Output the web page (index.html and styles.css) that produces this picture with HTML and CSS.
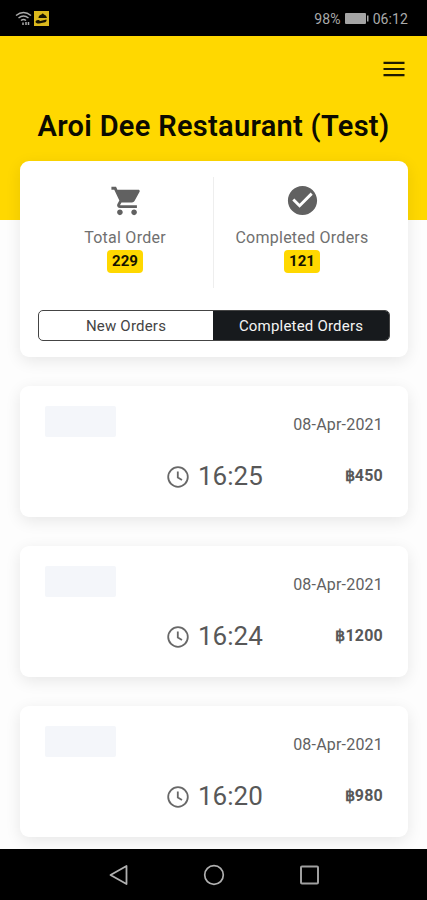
FILE: index.html
```html
<!DOCTYPE html>
<html lang="en">
<head>
  <meta charset="UTF-8" />
  <meta name="viewport" content="width=device-width, initial-scale=1.0"/>
  <title>Aroi Dee Restaurant</title>
  <link rel="stylesheet" href="styles.css">
</head>
<body>
  <div class="statusbar">
    <div class="status-left">
      <svg width="17" height="15" viewBox="0 0 17 15" fill="none" stroke="#aaa" stroke-width="1.500">
        <path d="M1 4.500Q8.500-1.500 16 4.500M3.500 7Q8.500 3 13.500 7M6 9.500Q8.500 7.500 11 9.500"/>
        <path d="M8 11.500V14M11 11V14M13.500 11V14"/>
      </svg>
      <svg width="15" height="15" viewBox="0 0 15 15">
        <rect width="15" height="15" fill="#dcb91c"/>
        <path d="M4.500 7Q4.500 4 7.500 3.500Q8.500 1.500 10 3.500Q12.500 4 13 7ZM1.500 10.500Q2 8.500 5 9L6 10L12.500 8.500Q13 11 10 11.500L5 12.500Q1.500 12.500 1.500 10.500Z" fill="#171300"/>
      </svg>
    </div>
    <div class="status-right">
      <span>98%</span>
      <svg width="24" height="11" viewBox="0 0 24 11"><rect width="21" height="11" rx="1" fill="#a4a4a4"/><path d="M22 2.500h1.500v6H22z" fill="#aaa"/></svg>
      <span>06:12</span>
    </div>
  </div>

  <header class="header">
    <svg class="menu" width="22" height="16" viewBox="0 0 22 16" fill="#1e1b00"><path d="M.5 0.700h21v2.300H.5zM.5 6.900h21v2.200H.5zM.5 13h21v2.300H.5z"/></svg>
    <h1>Aroi Dee Restaurant (Test)</h1>
  </header>

  <main>
    <section class="card summary">
      <div class="stats">
        <div class="stat">
          <svg class="cart" width="34" height="34" viewBox="0 0 24 24" fill="#616161"><path d="M7 18c-1.100 0-1.990.9-1.990 2S5.900 22 7 22s2-.9 2-2-.9-2-2-2zM1 2v2h2l3.600 7.590-1.350 2.450c-.16.280-.25.610-.25.960 0 1.100.9 2 2 2h12v-2H7.420c-.14 0-.25-.11-.25-.25l.03-.12.900-1.630h7.450c.75 0 1.410-.41 1.750-1.030l3.580-6.490c.08-.14.120-.31.120-.48 0-.55-.45-1-1-1H5.210l-.94-2H1zm16 16c-1.100 0-1.990.9-1.990 2s.89 2 1.990 2 2-.9 2-2-.9-2-2-2z"/></svg>
          <span class="label">Total Order</span>
          <span class="badge">229</span>
        </div>
        <div class="stat">
          <svg width="35" height="35" viewBox="0 0 24 24" fill="#616161"><path d="M12 2C6.480 2 2 6.480 2 12s4.480 10 10 10 10-4.480 10-10S17.520 2 12 2zm-2 15l-5-5 1.410-1.410L10 14.170l7.590-7.590L19 8l-9 9z"/></svg>
          <span class="label">Completed Orders</span>
          <span class="badge">121</span>
        </div>
      </div>
      <div class="tabs">
        <div class="tab">New Orders</div>
        <div class="tab active">Completed Orders</div>
      </div>
    </section>

    <section class="card order">
      <div class="row"><span class="tag"></span><span class="date">08-Apr-2021</span></div>
      <div class="row bottom">
        <svg class="clock" viewBox="0 0 22 22" fill="none" stroke="#686868" stroke-width="1.800"><circle cx="11" cy="11" r="9.800"/><path d="M10.800 5.500V11.500L15 14"/></svg>
        <span class="time">16:25</span>
        <span class="price">฿450</span>
      </div>
    </section>

    <section class="card order">
      <div class="row"><span class="tag"></span><span class="date">08-Apr-2021</span></div>
      <div class="row bottom">
        <svg class="clock" viewBox="0 0 22 22" fill="none" stroke="#686868" stroke-width="1.800"><circle cx="11" cy="11" r="9.800"/><path d="M10.800 5.500V11.500L15 14"/></svg>
        <span class="time">16:24</span>
        <span class="price">฿1200</span>
      </div>
    </section>

    <section class="card order">
      <div class="row"><span class="tag"></span><span class="date">08-Apr-2021</span></div>
      <div class="row bottom">
        <svg class="clock" viewBox="0 0 22 22" fill="none" stroke="#686868" stroke-width="1.800"><circle cx="11" cy="11" r="9.800"/><path d="M10.800 5.500V11.500L15 14"/></svg>
        <span class="time">16:20</span>
        <span class="price">฿980</span>
      </div>
    </section>
  </main>

  <nav class="navbar">
    <svg width="20" height="22" viewBox="0 0 20 22" fill="none" stroke="#b0b0b0" stroke-width="1.800" stroke-linejoin="round"><path d="M18.500 2V20L2.500 11Z"/></svg>
    <svg width="22" height="22" viewBox="0 0 22 22" fill="none" stroke="#b0b0b0" stroke-width="1.700"><circle cx="11" cy="11" r="9.300"/></svg>
    <svg width="20" height="20" viewBox="0 0 20 20" fill="none" stroke="#a0a0a0" stroke-width="2"><rect x="1" y="1.500" width="17" height="17" rx="1"/></svg>
  </nav>
</body>
</html>
```

FILE: styles.css
```css
* { box-sizing: border-box; }
body { margin: 0; height: 900px; overflow: hidden; display: flex; flex-direction: column; background: #fdfdfd; font-family: Roboto, "Noto Sans", sans-serif; color: #616161; }
.statusbar { height: 36px; flex: none; background: #000; color: #aaa; display: flex; justify-content: space-between; align-items: center; padding: 1px 19px 0 15px; font-size: 14px; }
.status-left { display: flex; gap: 2px; }
.status-right { display: flex; align-items: center; gap: 4px; letter-spacing: .1px; }
.header { height: 184px; flex: none; background: #ffd800; padding: 25px 22px 0; display: flex; flex-direction: column; align-items: center; }
.menu { align-self: flex-end; }
h1 { margin: 31px 0 0; font-size: 29px; line-height: 36px; font-weight: 600; letter-spacing: .3px; color: #0c0b00; white-space: nowrap; }
main { height: 629px; flex: none; padding: 0 19px 0 20px; display: flex; flex-direction: column; gap: 29px; }
.card { background: #fff; border-radius: 9px; box-shadow: 0 4px 16px rgba(0,0,0,.09); flex: none; }
.summary { height: 196px; margin-top: -59px; padding: 16px 18px; }
.stats { display: flex; height: 111px; }
.stat { flex: 1; display: flex; flex-direction: column; align-items: center; padding-top: 6px; }
.stat + .stat { border-left: 1px solid #eee; }
.cart { margin: 1px 0 0 3px; }
.label { font-size: 16px; line-height: 20px; margin-top: 10px; letter-spacing: .25px; color: #707070; }
.badge { background: #ffd800; color: #151300; font-size: 15px; font-weight: 700; line-height: 23px; padding: 0 5px; border-radius: 4px; margin-top: 2px; }
.stats, .tabs { margin-left: -1px; }
.tabs { display: flex; height: 31px; margin: 22px 0 0; border: 1px solid #444; border-radius: 5px; overflow: hidden; }
.tab { width: 174px; text-align: center; font-size: 15px; line-height: 31px; letter-spacing: .2px; color: #444; }
.active { flex: 1; background: #171a1d; color: #f4f4f4; }
.order { height: 131px; padding: 20px 25px; }
.row { display: flex; justify-content: space-between; align-items: center; }
.tag { width: 71px; height: 31px; background: #f4f6fa; border-radius: 2px; }
.date { font-size: 16px; margin-top: 6px; letter-spacing: .2px; }
.bottom { justify-content: flex-start; height: 32px; margin-top: 23px; padding-left: 122px; }
.clock { width: 22px; height: 22px; margin-top: 1px; }
.time { font-size: 26px; margin-left: 9px; color: #585858; }
.price { margin-left: auto; margin-top: -2px; font-size: 16px; font-weight: 700; letter-spacing: .2px; color: #585858; }
.navbar { height: 51px; flex: none; margin-top: auto; background: #000; display: flex; justify-content: center; align-items: center; gap: 75px; position: relative; }
```
